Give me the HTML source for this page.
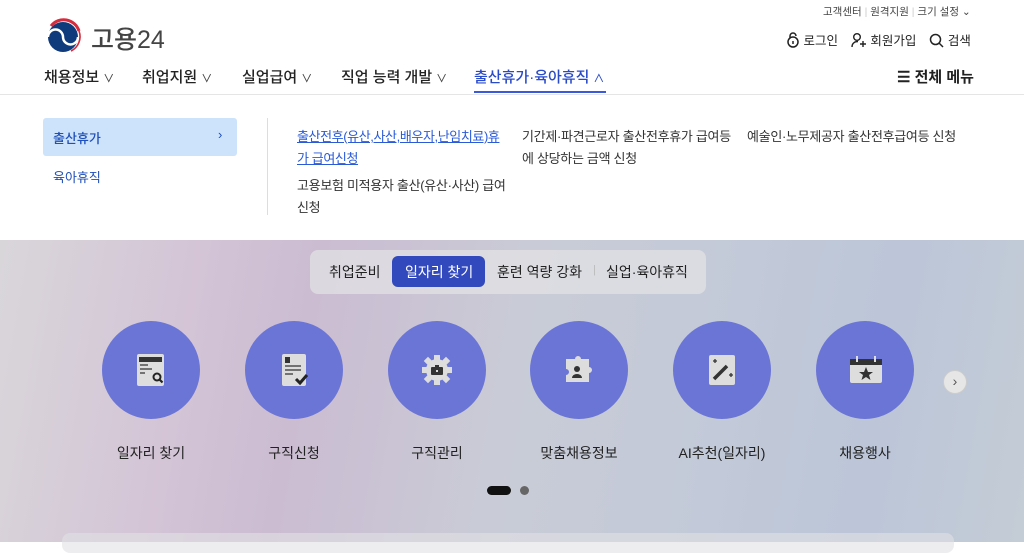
<!DOCTYPE html>
<html><head><meta charset="utf-8"><style>
*{margin:0;padding:0;box-sizing:border-box}
body{width:1024px;height:542px;overflow:hidden;font-family:"Liberation Sans","Noto Sans CJK KR",sans-serif;color:#222;background:#fff;position:relative}
.abs{position:absolute}
.top{font-size:10.5px;color:#444}
.nav span{position:absolute;top:66px;font-size:15px;color:#222;font-weight:500}
.nav small{font-size:11px;color:#444;margin-left:4px}
.hero{position:absolute;top:240px;left:0;width:1024px;height:302px;background:linear-gradient(100deg,#d9d6da 0%,#d3c3d6 20%,#cbbcd2 30%,#c9ccd6 50%,#c4cad8 65%,#bcc6d8 85%,#c4ccd6 100%)}
.circ{position:absolute;top:321px;width:98px;height:98px;border-radius:50%;background:#6b75d6}
.circ svg{position:absolute;left:29px;top:29px}
.lbl{position:absolute;top:443px;width:140px;text-align:center;font-size:14px;color:#222}
.sub{font-size:13px;color:#333;line-height:22px;position:absolute;white-space:nowrap}
</style></head><body>
<svg class="abs" style="left:45px;top:17px" width="38" height="38" viewBox="0 0 38 38">
<circle cx="18" cy="20" r="15" fill="#0f3a7c"/>
<path d="M3 20a7.5 7.5 0 0 1 15 0a7.5 7.5 0 0 0 15 0" fill="none" stroke="#fff" stroke-width="2.5"/>
<path d="M6 9A16 16 0 0 1 34 14" fill="none" stroke="#d52b3c" stroke-width="3"/>
<path d="M34 14A16 16 0 0 1 26 34" fill="none" stroke="#d52b3c" stroke-width="1.6"/>
</svg>
<div class="abs" style="left:91px;top:20px;font-size:25px;color:#444;font-weight:500">고용24</div>
<div class="abs top" style="left:823px;top:4px">고객센터 <span style="color:#ccc">|</span> 원격지원 <span style="color:#ccc">|</span> 크기 설정 ⌄</div>
<div class="abs" style="left:786px;top:30px;font-size:12.5px;color:#222">
<svg width="14" height="16" viewBox="0 0 14 16" style="vertical-align:-3px"><circle cx="7" cy="10" r="5" fill="none" stroke="#222" stroke-width="1.5"/><path d="M4 6V4a3 3 0 0 1 6 0" fill="none" stroke="#222" stroke-width="1.5"/><path d="M7 9v3" stroke="#222" stroke-width="1.5"/></svg> 로그인
<span style="display:inline-block;width:6px"></span>
<svg width="16" height="16" viewBox="0 0 16 16" style="vertical-align:-3px"><circle cx="6" cy="5" r="3.3" fill="none" stroke="#222" stroke-width="1.4"/><path d="M1 15c0-4 3-5.5 6-5.5" fill="none" stroke="#222" stroke-width="1.4"/><path d="M12 9v6M9 12h6" stroke="#222" stroke-width="1.4"/></svg> 회원가입
<span style="display:inline-block;width:6px"></span>
<svg width="15" height="15" viewBox="0 0 15 15" style="vertical-align:-3px"><circle cx="6.5" cy="6.5" r="5" fill="none" stroke="#222" stroke-width="1.5"/><path d="M10 10l4 4" stroke="#222" stroke-width="1.5"/></svg> 검색
</div>
<div class="nav">
<span style="left:44px">채용정보<small>∨</small></span>
<span style="left:142px">취업지원<small>∨</small></span>
<span style="left:242px">실업급여<small>∨</small></span>
<span style="left:341px">직업 능력 개발<small>∨</small></span>
<span style="left:474px;color:#2a4bc9">출산휴가·육아휴직<small style="color:#2a4bc9">∧</small></span>
<span style="left:897px;font-weight:600">☰ 전체 메뉴</span>
</div>
<div class="abs" style="left:474px;top:91px;width:132px;height:2px;background:#3a5ad8"></div>
<div class="abs" style="left:0;top:94px;width:1024px;height:1px;background:#e5e5e5"></div>
<div class="abs" style="left:43px;top:118px;width:194px;height:38px;background:#cde3fb;border-radius:3px"></div>
<div class="abs" style="left:53px;top:128px;font-size:13px;color:#1f4fb8;font-weight:500">출산휴가</div>
<div class="abs" style="left:218px;top:127px;font-size:13px;color:#1f4fb8">›</div>
<div class="abs" style="left:53px;top:167px;font-size:13px;color:#1f4fb8">육아휴직</div>
<div class="abs" style="left:267px;top:118px;width:1px;height:97px;background:#ddd"></div>
<div class="sub" style="left:297px;top:126px;color:#2a5ad8;text-decoration:underline;letter-spacing:-0.4px">출산전후(유산,사산,배우자,난임치료)휴<br>가 급여신청</div>
<div class="sub" style="left:297px;top:175px;letter-spacing:-0.3px">고용보험 미적용자 출산(유산·사산) 급여<br>신청</div>
<div class="sub" style="left:522px;top:126px;letter-spacing:-0.3px">기간제·파견근로자 출산전후휴가 급여등<br>에 상당하는 금액 신청</div>
<div class="sub" style="left:747px;top:126px;letter-spacing:-0.3px">예술인·노무제공자 출산전후급여등 신청</div>
<div class="hero"></div>
<div class="abs" style="left:310px;top:250px;width:396px;height:44px;background:rgba(225,225,228,.75);border-radius:8px"></div>
<div class="abs" style="left:392px;top:256px;width:93px;height:31px;background:#3249be;border-radius:6px"></div>
<div class="abs" style="left:329px;top:262px;font-size:14px;color:#222">취업준비</div>
<div class="abs" style="left:405px;top:262px;font-size:14px;color:#fff">일자리 찾기</div>
<div class="abs" style="left:497px;top:262px;font-size:14px;color:#222">훈련 역량 강화</div>
<div class="abs" style="left:593px;top:264px;font-size:11px;color:#bbb">|</div>
<div class="abs" style="left:606px;top:262px;font-size:14px;color:#222">실업·육아휴직</div>

<div class="circ" style="left:102px"><svg width="40" height="40" viewBox="0 0 40 40"><rect x="6" y="4" width="27" height="32" rx="2" fill="#ddd"/><rect x="8" y="7" width="23" height="5" fill="#333"/><path d="M9 15h8M9 19h12M9 23h5" stroke="#333" stroke-width="1.3"/><circle cx="26" cy="27" r="3.5" fill="none" stroke="#222" stroke-width="2"/><path d="M28.5 29.5l3 3" stroke="#222" stroke-width="2.2"/></svg></div>
<div class="circ" style="left:245px"><svg width="40" height="40" viewBox="0 0 40 40"><rect x="8" y="4" width="24" height="32" rx="2" fill="#ddd"/><rect x="11" y="7" width="5" height="6" fill="#333"/><path d="M11 16h16M11 20h16M11 24h8" stroke="#333" stroke-width="1.3"/><path d="M22 29l4 4 7-8" stroke="#222" stroke-width="3" fill="none"/></svg></div>
<div class="circ" style="left:388px"><svg width="40" height="40" viewBox="0 0 40 40"><circle cx="20" cy="20" r="11" fill="#ddd"/><g fill="#ddd"><rect x="17" y="5" width="6" height="6"/><rect x="17" y="29" width="6" height="6"/><rect x="5" y="17" width="6" height="6"/><rect x="29" y="17" width="6" height="6"/><rect x="8" y="8" width="6" height="6" transform="rotate(45 11 11)"/><rect x="26" y="8" width="6" height="6" transform="rotate(45 29 11)"/><rect x="8" y="26" width="6" height="6" transform="rotate(45 11 29)"/><rect x="26" y="26" width="6" height="6" transform="rotate(45 29 29)"/></g><rect x="14" y="17" width="12" height="8" rx="1" fill="#333"/><rect x="18" y="15" width="4" height="2" fill="#333"/><rect x="19" y="20" width="2" height="2" fill="#ddd"/></svg></div>
<div class="circ" style="left:530px"><svg width="40" height="40" viewBox="0 0 40 40"><path d="M7 9h9a3 3 0 1 1 6 0h8v8a3 3 0 1 1 0 6v9H7v-7a3 3 0 1 0 0-6z" fill="#ddd"/><circle cx="18" cy="19" r="3" fill="#333"/><path d="M13 28a5 4 0 0 1 10 0z" fill="#333"/></svg></div>
<div class="circ" style="left:673px"><svg width="40" height="40" viewBox="0 0 40 40"><rect x="7" y="5" width="26" height="30" rx="2" fill="#ddd"/><path d="M12 29l13-13" stroke="#333" stroke-width="3.5"/><path d="M11 11h4M13 9v4M27 25h4M29 23v4" stroke="#333" stroke-width="1.3"/></svg></div>
<div class="circ" style="left:816px"><svg width="40" height="40" viewBox="0 0 40 40"><rect x="5" y="9" width="32" height="24" rx="2" fill="#ddd"/><rect x="5" y="9" width="32" height="6" fill="#333"/><path d="M12 6v6M30 6v6" stroke="#ddd" stroke-width="2"/><path d="M21 17l2 5h5l-4 3 1.5 5-4.5-3-4.5 3 1.5-5-4-3h5z" fill="#333"/></svg></div>
<div class="abs" style="left:943px;top:370px;width:24px;height:24px;border-radius:50%;background:#e6e6e6;border:1px solid #ccc;text-align:center;font-size:14px;line-height:21px;color:#555">›</div>

<div class="lbl" style="left:81px">일자리 찾기</div>
<div class="lbl" style="left:224px">구직신청</div>
<div class="lbl" style="left:367px">구직관리</div>
<div class="lbl" style="left:509px">맞춤채용정보</div>
<div class="lbl" style="left:652px">AI추천(일자리)</div>
<div class="lbl" style="left:795px">채용행사</div>
<div class="abs" style="left:487px;top:486px;width:24px;height:9px;border-radius:5px;background:#111"></div>
<div class="abs" style="left:520px;top:486px;width:9px;height:9px;border-radius:50%;background:#666"></div>
<div class="abs" style="left:62px;top:533px;width:892px;height:20px;border-radius:8px;background:rgba(225,225,228,.6)"></div>
</body></html>
